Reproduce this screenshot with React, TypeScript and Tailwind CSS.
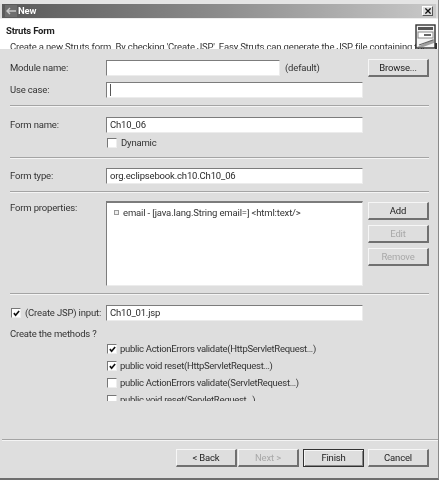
import React from "react";

function Sep({ className = "" }: { className?: string }) {
  return <div className={"h-[2px] border-t border-t-[#a4a4a4] border-b border-b-[#f4f4f4] " + className} />;
}

function Input({ className = "", value = "", caret = false }: { className?: string; value?: string; caret?: boolean }) {
  return (
    <div className={"h-[16px] bg-white border-t border-l border-t-[#7c7c7c] border-l-[#7c7c7c] border-b border-r border-b-[#ececec] border-r-[#ececec] flex items-center pl-[3px] text-[#2a2a2a] " + className}>
      {caret && <span className="w-px h-[12px] bg-[#555]" />}
      {value}
    </div>
  );
}

function Btn({ label, disabled = false, strong = false, className = "" }: { label: string; disabled?: boolean; strong?: boolean; className?: string }) {
  const edge = strong
    ? "border border-[#333] shadow-[inset_1px_1px_0_#f6f6f6,inset_-1px_-1px_0_#888]"
    : "border-t border-l border-t-[#f6f6f6] border-l-[#f6f6f6] border-b-2 border-r-2 border-b-[#707070] border-r-[#707070]";
  return (
    <div className={"h-[18px] w-[61px] flex items-center justify-center bg-[#dedede] " + edge + " " + (disabled ? "text-[#a8a8a8] " : "text-[#222] ") + className}>
      {label}
    </div>
  );
}

function Check({ checked = false }: { checked?: boolean }) {
  return (
    <div className="w-[10px] h-[10px] shrink-0 bg-white border-t border-l border-t-[#777] border-l-[#777] border-b border-r border-b-[#eee] border-r-[#eee] flex items-center justify-center">
      {checked && (
        <svg width="7" height="7" viewBox="0 0 8 8" fill="none">
          <path d="M1 3.6 L3 6 L7 1.2" stroke="#111" strokeWidth="1.9" />
        </svg>
      )}
    </div>
  );
}

function Label({ children, className = "" }: { children: React.ReactNode; className?: string }) {
  return <div className={"w-[96px] shrink-0 text-[#333] " + className}>{children}</div>;
}

function Method({ checked = false, label }: { checked?: boolean; label: string }) {
  return (
    <div className="h-[17px] flex items-center gap-[3px] pl-px text-[#333] tracking-[-0.3px]">
      <Check checked={checked} />
      <span>{label}</span>
    </div>
  );
}

export default function App() {
  return (
    <div className="w-[439px] h-[480px] flex flex-col bg-[#dedede] overflow-hidden border-b-2 border-b-[#6e6e6e] border-r border-r-[#8a8a8a] font-['Roboto',sans-serif] text-[9.5px] tracking-[-0.17px] leading-none [filter:blur(0.35px)]">
      <div className="h-[4px] bg-[#e4e4e4]" />
      <div className="h-[14px] mx-[2px] flex items-center pl-[3px] pr-[3px] bg-gradient-to-r from-[#5a5a5a] via-[#8c8c8c] to-[#c9c9c9] text-white font-bold">
        <svg width="12" height="12" viewBox="0 0 12 12" className="mr-[1px]">
          <rect x="0" y="0" width="12" height="12" fill="#6e6e6e" />
          <path d="M2 6 H11 M5 3 L2 6 L5 9" stroke="#c8c8c8" strokeWidth="1.4" fill="none" />
        </svg>
        <span className="[text-shadow:0_0_1px_#333]">New</span>
        <div className="ml-auto w-[11px] h-[10px] bg-[#dedede] border-r border-b border-r-[#555] border-b-[#555] border-t border-l border-t-white border-l-white flex items-center justify-center">
          <svg width="6" height="6" viewBox="0 0 7 7">
            <path d="M0.5 0.5 L6.5 6.5 M6.5 0.5 L0.5 6.5" stroke="#111" strokeWidth="1.5" />
          </svg>
        </div>
      </div>
      <div className="relative h-[31px] bg-white border-t border-t-[#eee] pl-[6px] overflow-hidden text-[#222]">
        <div className="mt-[7px] font-bold">Struts Form</div>
        <div className="mt-[6px] ml-[4px] whitespace-nowrap text-[#333]">
          Create a new Struts form. By checking 'Create JSP', Easy Struts can generate the JSP file containing the
        </div>
        <svg width="22" height="26" viewBox="0 0 22 26" className="absolute right-[1px] top-[5px]">
          <rect x="1" y="1" width="19" height="23" fill="#f4f4f4" stroke="#333" strokeWidth="1.4" />
          <rect x="3" y="3" width="15" height="3" fill="#555" />
          <rect x="3" y="8" width="15" height="6" fill="#fff" stroke="#888" />
          <rect x="9" y="10" width="7" height="2" fill="#666" />
          <path d="M2 23 L19 15 V19 L8 23 Z" fill="#a0a0a0" />
          <path d="M4 21 L18 16" stroke="#666" strokeWidth="1.2" />
          <rect x="20" y="19" width="2" height="6" fill="#333" />
        </svg>
      </div>

      <div className="flex flex-col pl-[10px] pr-[9px] flex-1">
        <div className="flex items-center h-[18px] mt-[10px]">
          <Label>Module name:</Label>
          <Input className="w-[174px]" />
          <span className="ml-[5px] text-[#333]">(default)</span>
          <Btn label="Browse..." className="ml-auto" />
        </div>
        <div className="flex items-center h-[16px] mt-[5px]">
          <Label>Use case:</Label>
          <Input className="w-[257px]" caret />
        </div>
        <Sep className="mt-[7px]" />
        <div className="flex items-center h-[16px] mt-[10px]">
          <Label>Form name:</Label>
          <Input className="w-[257px]" value="Ch10_06" />
        </div>
        <div className="flex items-center gap-[4px] h-[12px] ml-[97px] mt-[4px] text-[#333]">
          <Check />
          <span>Dynamic</span>
        </div>
        <Sep className="mt-[8px]" />
        <div className="flex items-center h-[16px] mt-[9px]">
          <Label>Form type:</Label>
          <Input className="w-[257px]" value="org.eclipsebook.ch10.Ch10_06" />
        </div>
        <Sep className="mt-[7px]" />
        <div className="flex mt-[8px]">
          <Label className="pt-[2px]">Form properties:</Label>
          <div className="w-[257px] h-[85px] bg-white border-t-2 border-l border-t-[#7c7c7c] border-l-[#7c7c7c] border-b border-r border-b-[#ececec] border-r-[#ececec] flex items-start pl-[7px] pt-[5px] text-[#333]">
            <div className="w-[5px] h-[5px] mt-[2px] mr-[4px] border border-[#999] bg-[#eee]" />
            <span className="tracking-[-0.15px]">email - [java.lang.String email=] &lt;html:text/&gt;</span>
          </div>
          <div className="ml-auto flex flex-col gap-[5px] pt-[1px]">
            <Btn label="Add" />
            <Btn label="Edit" disabled />
            <Btn label="Remove" disabled />
          </div>
        </div>
        <Sep className="mt-[7px]" />
        <div className="flex items-center h-[16px] mt-[10px]">
          <div className="w-[96px] shrink-0 flex items-center gap-[4px] pl-px text-[#333]">
            <Check checked />
            <span className="whitespace-nowrap">(Create JSP) input:</span>
          </div>
          <Input className="w-[257px]" value="Ch10_01.jsp" />
        </div>
        <div className="mt-[8px] text-[#333]">Create the methods ?</div>
        <div className="ml-[96px] mt-[2px] h-[60px] overflow-hidden">
          <Method checked label="public ActionErrors validate(HttpServletRequest…)" />
          <Method checked label="public void reset(HttpServletRequest…)" />
          <Method label="public ActionErrors validate(ServletRequest…)" />
          <Method label="public void reset(ServletRequest…)" />
        </div>
      </div>

      <Sep className="ml-[2px]" />
      <div className="flex justify-end items-center pr-[9px] pt-[8px] pb-[11px]">
        <Btn label="< Back" />
        <Btn label="Next >" disabled className="ml-[1px]" />
        <Btn label="Finish" strong className="ml-[4px]" />
        <Btn label="Cancel" className="ml-[4px]" />
      </div>
    </div>
  );
}
